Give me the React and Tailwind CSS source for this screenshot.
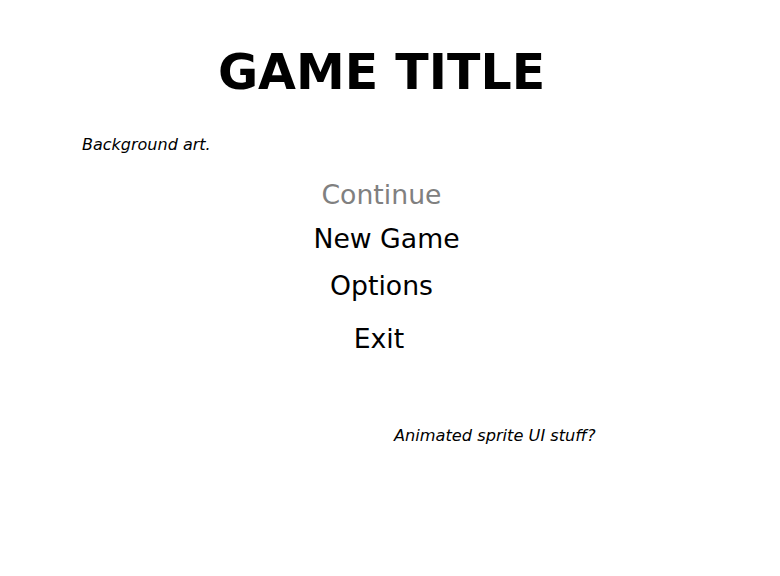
export default function App() {
  return (
    <div className="w-[763px] h-[576px] bg-white text-black font-['DejaVu_Sans',sans-serif] flex flex-col">
      <h1 className="mt-[48px] text-center text-[49px] font-bold leading-none">GAME TITLE</h1>
      <p className="mt-[40px] pl-[82px] text-[16px] italic leading-none">Background art.</p>
      <nav className="mt-[29px] flex flex-col items-center">
        <button className="text-[26.7px] leading-none text-[#808080]">Continue</button>
        <button className="mt-[17px] ml-[10px] text-[26.7px] leading-none">New Game</button>
        <button className="mt-[21px] text-[26.7px] leading-none">Options</button>
        <button className="mt-[26px] mr-[5px] text-[26.7px] leading-none">Exit</button>
      </nav>
      <p className="mt-[75px] pl-[394px] text-[16.2px] italic leading-none">Animated sprite UI stuff?</p>
    </div>
  );
}
